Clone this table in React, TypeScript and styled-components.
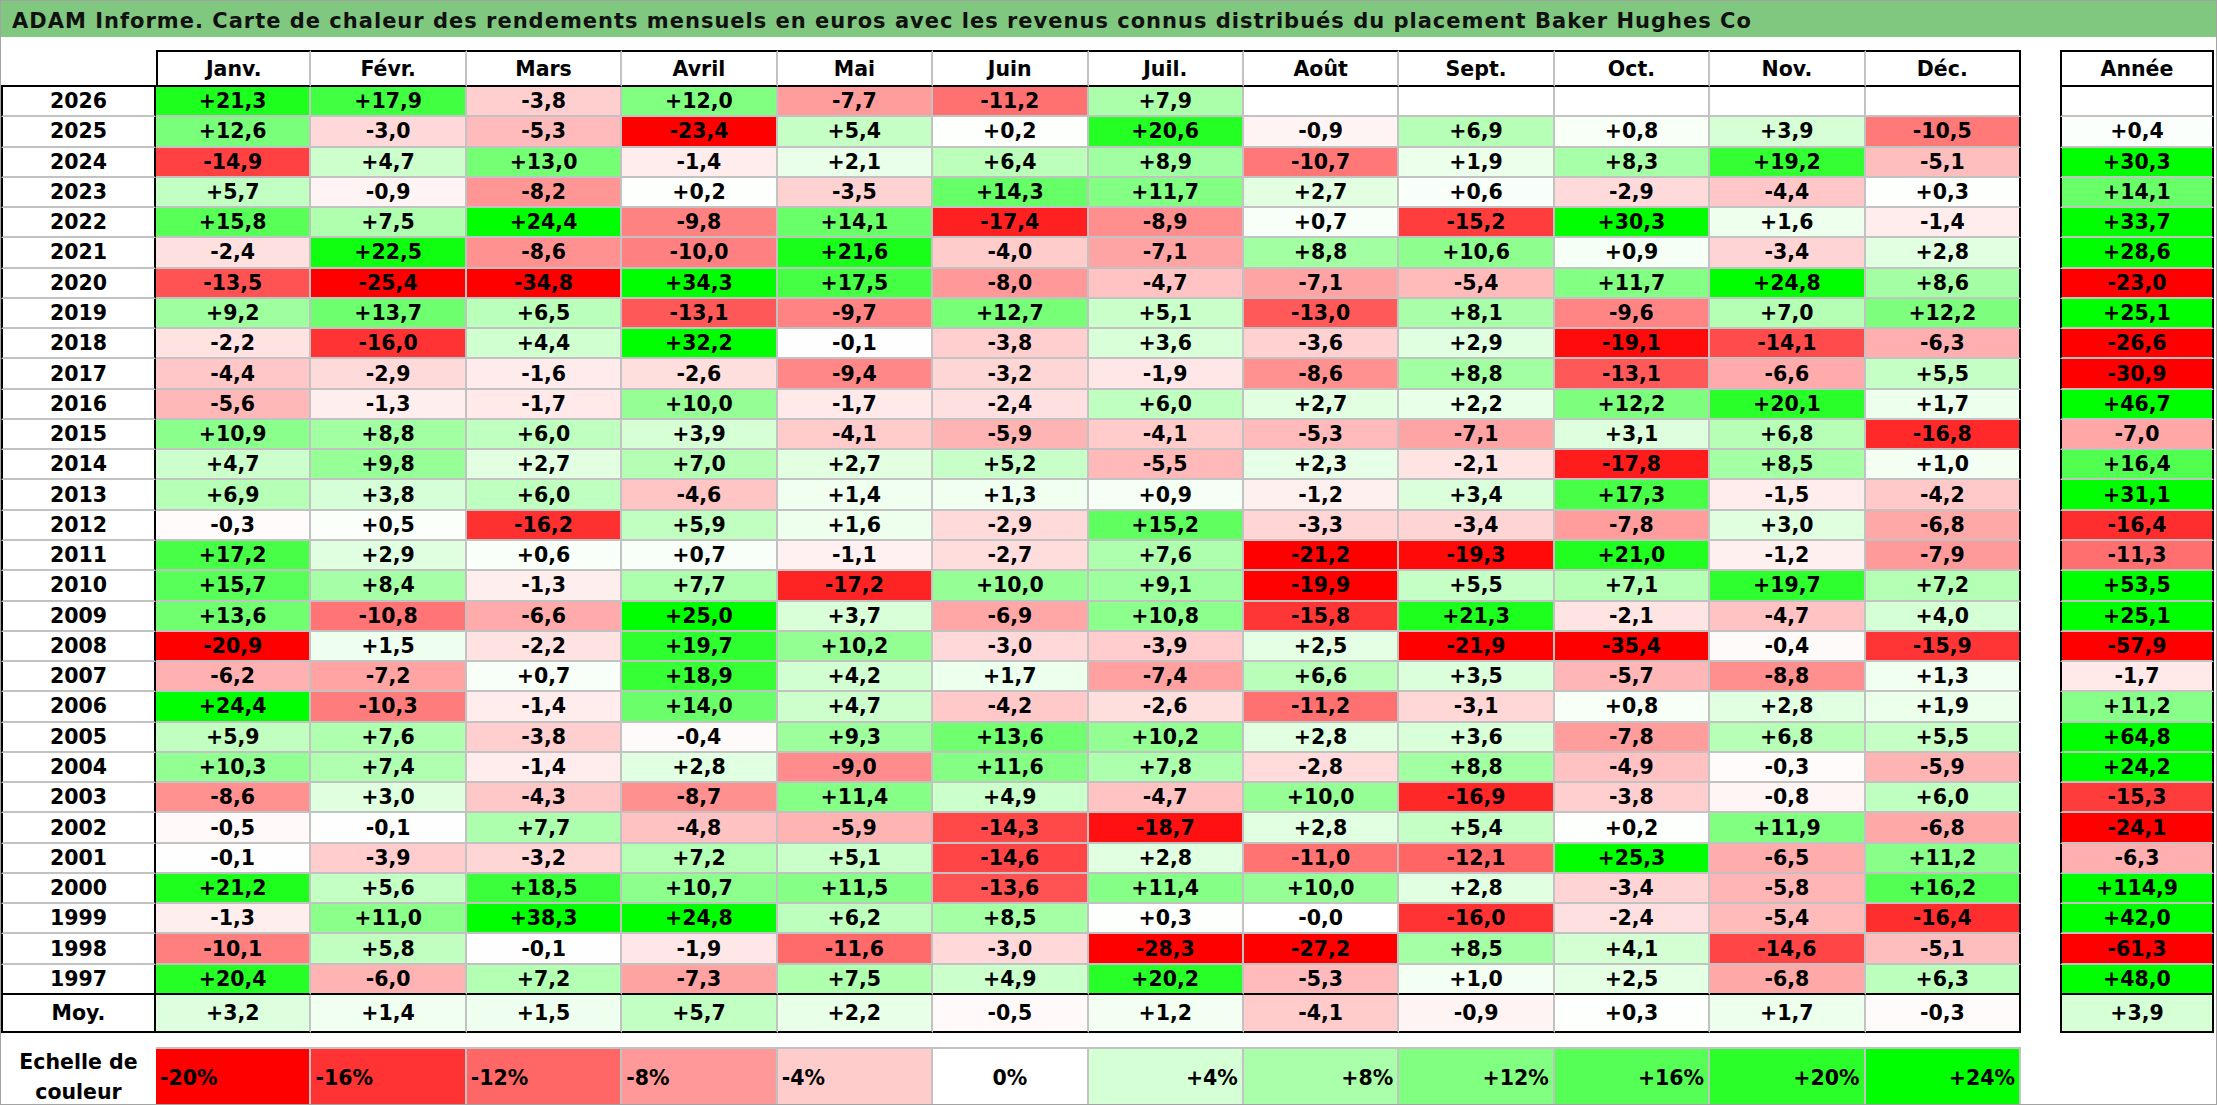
import styled, { createGlobalStyle } from 'styled-components';

const MONTHS = ['Janv.', 'Févr.', 'Mars', 'Avril', 'Mai', 'Juin', 'Juil.', 'Août', 'Sept.', 'Oct.', 'Nov.', 'Déc.'];

const ROWS: [string, string, string][] = [
    ['2026', '+21,3 +17,9 -3,8 +12,0 -7,7 -11,2 +7,9', ''],
    ['2025', '+12,6 -3,0 -5,3 -23,4 +5,4 +0,2 +20,6 -0,9 +6,9 +0,8 +3,9 -10,5', '+0,4'],
    ['2024', '-14,9 +4,7 +13,0 -1,4 +2,1 +6,4 +8,9 -10,7 +1,9 +8,3 +19,2 -5,1', '+30,3'],
    ['2023', '+5,7 -0,9 -8,2 +0,2 -3,5 +14,3 +11,7 +2,7 +0,6 -2,9 -4,4 +0,3', '+14,1'],
    ['2022', '+15,8 +7,5 +24,4 -9,8 +14,1 -17,4 -8,9 +0,7 -15,2 +30,3 +1,6 -1,4', '+33,7'],
    ['2021', '-2,4 +22,5 -8,6 -10,0 +21,6 -4,0 -7,1 +8,8 +10,6 +0,9 -3,4 +2,8', '+28,6'],
    ['2020', '-13,5 -25,4 -34,8 +34,3 +17,5 -8,0 -4,7 -7,1 -5,4 +11,7 +24,8 +8,6', '-23,0'],
    ['2019', '+9,2 +13,7 +6,5 -13,1 -9,7 +12,7 +5,1 -13,0 +8,1 -9,6 +7,0 +12,2', '+25,1'],
    ['2018', '-2,2 -16,0 +4,4 +32,2 -0,1 -3,8 +3,6 -3,6 +2,9 -19,1 -14,1 -6,3', '-26,6'],
    ['2017', '-4,4 -2,9 -1,6 -2,6 -9,4 -3,2 -1,9 -8,6 +8,8 -13,1 -6,6 +5,5', '-30,9'],
    ['2016', '-5,6 -1,3 -1,7 +10,0 -1,7 -2,4 +6,0 +2,7 +2,2 +12,2 +20,1 +1,7', '+46,7'],
    ['2015', '+10,9 +8,8 +6,0 +3,9 -4,1 -5,9 -4,1 -5,3 -7,1 +3,1 +6,8 -16,8', '-7,0'],
    ['2014', '+4,7 +9,8 +2,7 +7,0 +2,7 +5,2 -5,5 +2,3 -2,1 -17,8 +8,5 +1,0', '+16,4'],
    ['2013', '+6,9 +3,8 +6,0 -4,6 +1,4 +1,3 +0,9 -1,2 +3,4 +17,3 -1,5 -4,2', '+31,1'],
    ['2012', '-0,3 +0,5 -16,2 +5,9 +1,6 -2,9 +15,2 -3,3 -3,4 -7,8 +3,0 -6,8', '-16,4'],
    ['2011', '+17,2 +2,9 +0,6 +0,7 -1,1 -2,7 +7,6 -21,2 -19,3 +21,0 -1,2 -7,9', '-11,3'],
    ['2010', '+15,7 +8,4 -1,3 +7,7 -17,2 +10,0 +9,1 -19,9 +5,5 +7,1 +19,7 +7,2', '+53,5'],
    ['2009', '+13,6 -10,8 -6,6 +25,0 +3,7 -6,9 +10,8 -15,8 +21,3 -2,1 -4,7 +4,0', '+25,1'],
    ['2008', '-20,9 +1,5 -2,2 +19,7 +10,2 -3,0 -3,9 +2,5 -21,9 -35,4 -0,4 -15,9', '-57,9'],
    ['2007', '-6,2 -7,2 +0,7 +18,9 +4,2 +1,7 -7,4 +6,6 +3,5 -5,7 -8,8 +1,3', '-1,7'],
    ['2006', '+24,4 -10,3 -1,4 +14,0 +4,7 -4,2 -2,6 -11,2 -3,1 +0,8 +2,8 +1,9', '+11,2'],
    ['2005', '+5,9 +7,6 -3,8 -0,4 +9,3 +13,6 +10,2 +2,8 +3,6 -7,8 +6,8 +5,5', '+64,8'],
    ['2004', '+10,3 +7,4 -1,4 +2,8 -9,0 +11,6 +7,8 -2,8 +8,8 -4,9 -0,3 -5,9', '+24,2'],
    ['2003', '-8,6 +3,0 -4,3 -8,7 +11,4 +4,9 -4,7 +10,0 -16,9 -3,8 -0,8 +6,0', '-15,3'],
    ['2002', '-0,5 -0,1 +7,7 -4,8 -5,9 -14,3 -18,7 +2,8 +5,4 +0,2 +11,9 -6,8', '-24,1'],
    ['2001', '-0,1 -3,9 -3,2 +7,2 +5,1 -14,6 +2,8 -11,0 -12,1 +25,3 -6,5 +11,2', '-6,3'],
    ['2000', '+21,2 +5,6 +18,5 +10,7 +11,5 -13,6 +11,4 +10,0 +2,8 -3,4 -5,8 +16,2', '+114,9'],
    ['1999', '-1,3 +11,0 +38,3 +24,8 +6,2 +8,5 +0,3 -0,0 -16,0 -2,4 -5,4 -16,4', '+42,0'],
    ['1998', '-10,1 +5,8 -0,1 -1,9 -11,6 -3,0 -28,3 -27,2 +8,5 +4,1 -14,6 -5,1', '-61,3'],
    ['1997', '+20,4 -6,0 +7,2 -7,3 +7,5 +4,9 +20,2 -5,3 +1,0 +2,5 -6,8 +6,3', '+48,0'],
];

const AVERAGE = '+3,2 +1,4 +1,5 +5,7 +2,2 -0,5 +1,2 -4,1 -0,9 +0,3 +1,7 -0,3'.split(' ');
const AVERAGE_YEAR = '+3,9';

const SCALE = [-20, -16, -12, -8, -4, 0, 4, 8, 12, 16, 20, 24];

// same 3-colour scale as the sheet: -20 red, 0 white, +24 green
const heat = (text: string) => {
    if (!text) return '#ffffff';
    const v = parseFloat(text.replace(',', '.'));
    if (v < 0) {
        const k = Math.round(255 * (1 - Math.min(1, -v / 20)));
        return `rgb(255, ${k}, ${k})`;
    }
    const k = Math.round(255 * (1 - Math.min(1, v / 24)));
    return `rgb(${k}, 255, ${k})`;
};

const cells = (line: string) => {
    const list = line.split(' ');
    while (list.length < 12) list.push('');
    return list;
};

const BLACK = '#000';
const GRID = '#c2c2c2';

export default function App() {
    return (
        <>
            <GlobalStyle />
            <ScPage>
                <ScTitle>
                    ADAM Informe. Carte de chaleur des rendements mensuels en euros avec les revenus connus distribués
                    du placement Baker Hughes Co
                </ScTitle>
                <ScContent>
                    <ScLeft>
                        <ScGrid>
                            <ScCorner />
                            {MONTHS.map((m, i) => (
                                <ScMonth key={m} $first={i === 0} $last={i === 11}>
                                    {m}
                                </ScMonth>
                            ))}
                            {ROWS.map(([year, line], r) => {
                                const sep = r === ROWS.length - 1;
                                return [
                                    <ScYear key={year} $sep={sep}>
                                        {year}
                                    </ScYear>,
                                    ...cells(line).map((v, i) => (
                                        <ScValue key={year + i} $bg={heat(v)} $last={i === 11} $sep={sep}>
                                            {v}
                                        </ScValue>
                                    )),
                                ];
                            })}
                            <ScYear $sep>Moy.</ScYear>
                            {AVERAGE.map((v, i) => (
                                <ScValue key={'avg' + i} $bg={heat(v)} $last={i === 11} $sep>
                                    {v}
                                </ScValue>
                            ))}
                        </ScGrid>
                        <ScLegend>
                            <ScLegendLabel>
                                <span>Echelle de</span>
                                <span>couleur</span>
                            </ScLegendLabel>
                            {SCALE.map((s) => (
                                <ScLegendCell
                                    key={s}
                                    $bg={heat(String(s))}
                                    $align={s < 0 ? 'flex-start' : s === 0 ? 'center' : 'flex-end'}
                                >
                                    {s > 0 ? `+${s}%` : `${s}%`}
                                </ScLegendCell>
                            ))}
                        </ScLegend>
                    </ScLeft>
                    <ScYearGrid>
                        <ScYearHead>Année</ScYearHead>
                        {ROWS.map(([year, , total], r) => (
                            <ScYearValue key={year} $bg={heat(total)} $sep={r === ROWS.length - 1}>
                                {total}
                            </ScYearValue>
                        ))}
                        <ScYearValue $bg={heat(AVERAGE_YEAR)} $sep>
                            {AVERAGE_YEAR}
                        </ScYearValue>
                    </ScYearGrid>
                </ScContent>
            </ScPage>
        </>
    );
}

const GlobalStyle = createGlobalStyle`
    html, body {
        margin: 0;
        padding: 0;
        background: #fff;
    }
    body {
        font-family: 'DejaVu Sans', 'Liberation Sans', sans-serif;
        font-weight: 700;
        color: #000;
    }
`;

const ScPage = styled.div`
    width: 2217px;
    height: 1105px;
    box-sizing: border-box;
    border: 1px solid #a3a3a3;
    display: flex;
    flex-direction: column;
    overflow: hidden;
`;

const ScTitle = styled.div`
    height: 36px;
    flex: 0 0 36px;
    box-sizing: border-box;
    background: #80c87f;
    padding: 5px 0 0 11px;
    line-height: 31px;
    font-size: 21px;
    letter-spacing: 1px;
    color: #111;
    white-space: nowrap;
`;

const ScContent = styled.div`
    display: flex;
    align-items: flex-start;
    gap: 39px;
    padding-top: 13px;
`;

const ScLeft = styled.div`
    width: 2020px;
    display: flex;
    flex-direction: column;
    gap: 14px;
`;

const ScGrid = styled.div`
    display: grid;
    grid-template-columns: 155px repeat(12, 1fr);
    grid-template-rows: 37px repeat(30, 1fr) 38px;
    height: 983px;
    font-size: 20.5px;
`;

const ScCell = styled.div`
    box-sizing: border-box;
    display: flex;
    align-items: center;
    justify-content: center;
    white-space: nowrap;
`;

const ScCorner = styled(ScCell)`
    border-bottom: 2px solid ${BLACK};
`;

const ScMonth = styled(ScCell)<{ $first?: boolean; $last?: boolean }>`
    border-top: 2px solid ${BLACK};
    border-bottom: 2px solid ${BLACK};
    border-left: ${(p) => (p.$first ? `2px solid ${BLACK}` : 'none')};
    border-right: 2px solid ${(p) => (p.$last ? BLACK : GRID)};
`;

const ScYear = styled(ScCell)<{ $sep?: boolean }>`
    border-left: 2px solid ${BLACK};
    border-right: 2px solid ${BLACK};
    border-bottom: 2px solid ${(p) => (p.$sep ? BLACK : GRID)};
`;

const ScValue = styled(ScCell)<{ $bg: string; $last?: boolean; $sep?: boolean }>`
    background: ${(p) => p.$bg};
    border-right: 2px solid ${(p) => (p.$last ? BLACK : GRID)};
    border-bottom: 2px solid ${(p) => (p.$sep ? BLACK : GRID)};
`;

const ScLegend = styled.div`
    display: grid;
    grid-template-columns: 155px repeat(12, 1fr);
    height: 57px;
    font-size: 20.5px;
`;

const ScLegendLabel = styled.div`
    display: flex;
    flex-direction: column;
    align-items: center;
    justify-content: center;
    line-height: 30px;
`;

const ScLegendCell = styled(ScCell)<{ $bg: string; $align: string }>`
    background: ${(p) => p.$bg};
    justify-content: ${(p) => p.$align};
    padding: 0 4px;
    border-top: 2px solid ${GRID};
    border-right: 2px solid ${GRID};
`;

const ScYearGrid = styled.div`
    width: 154px;
    display: grid;
    grid-template-rows: 37px repeat(30, 1fr) 38px;
    height: 983px;
    font-size: 20.5px;
`;

const ScYearHead = styled(ScCell)`
    border: 2px solid ${BLACK};
`;

const ScYearValue = styled(ScCell)<{ $bg: string; $sep?: boolean }>`
    background: ${(p) => p.$bg};
    border-left: 2px solid ${BLACK};
    border-right: 2px solid ${BLACK};
    border-bottom: 2px solid ${(p) => (p.$sep ? BLACK : GRID)};
`;
